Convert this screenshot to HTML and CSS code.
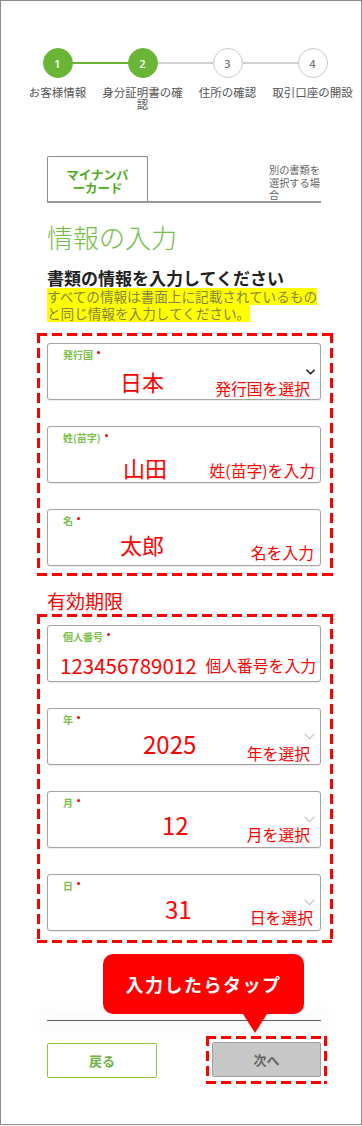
FILE: index.html
```html
<!DOCTYPE html>
<html lang="ja">
<head>
<meta charset="utf-8">
<title>情報の入力</title>
<link rel="stylesheet" href="styles.css">
</head>
<body>
<div class="frame">
  <ol class="stepper">
    <li class="step done">
      <div class="track"><span class="line none"></span><span class="dot">1</span><span class="line on"></span></div>
      <p class="step-label">お客様情報</p>
    </li>
    <li class="step done">
      <div class="track"><span class="line on"></span><span class="dot">2</span><span class="line"></span></div>
      <p class="step-label">身分証明書の確認</p>
    </li>
    <li class="step">
      <div class="track"><span class="line"></span><span class="dot">3</span><span class="line"></span></div>
      <p class="step-label">住所の確認</p>
    </li>
    <li class="step">
      <div class="track"><span class="line"></span><span class="dot">4</span><span class="line none"></span></div>
      <p class="step-label">取引口座の開設</p>
    </li>
  </ol>

  <main class="content">
    <div class="tabs">
      <div class="tab active">マイナンバ<br>ーカード</div>
      <div class="tab other">別の書類を<br>選択する場<br>合</div>
    </div>

    <h1 class="title">情報の入力</h1>
    <p class="lead">書類の情報を入力してください</p>
    <div class="note">
      <span class="hl">すべての情報は書面上に記載されているもの</span>
      <span class="hl">と同じ情報を入力してください。</span>
    </div>

    <div class="box box-first">
      <div class="field f-country">
        <div class="field-label">発行国<span class="req"></span></div>
        <div class="field-body"><span class="val">日本</span><span class="hint">発行国を選択</span></div>
        <svg class="chev dark" viewBox="0 0 10 6"><path d="M1 1 L5 5 L9 1" fill="none" stroke="#222" stroke-width="1.8" stroke-linecap="round" stroke-linejoin="round"/></svg>
      </div>
      <div class="field f-last">
        <div class="field-label">姓(苗字)<span class="req"></span></div>
        <div class="field-body"><span class="val">山田</span><span class="hint">姓(苗字)を入力</span></div>
      </div>
      <div class="field f-first">
        <div class="field-label">名<span class="req"></span></div>
        <div class="field-body"><span class="val">太郎</span><span class="hint">名を入力</span></div>
      </div>
    </div>

    <p class="sub">有効期限</p>

    <div class="box box-second">
      <div class="field f-num">
        <div class="field-label">個人番号<span class="req"></span></div>
        <div class="field-body"><span class="val">123456789012</span><span class="hint">個人番号を入力</span></div>
      </div>
      <div class="field f-year">
        <div class="field-label">年<span class="req"></span></div>
        <div class="field-body"><span class="val">2025</span><span class="hint">年を選択</span></div>
        <svg class="chev light" viewBox="0 0 10 6"><path d="M1 1 L5 5 L9 1" fill="none" stroke="#cfcfcf" stroke-width="1.4" stroke-linecap="round" stroke-linejoin="round"/></svg>
      </div>
      <div class="field f-month">
        <div class="field-label">月<span class="req"></span></div>
        <div class="field-body"><span class="val">12</span><span class="hint">月を選択</span></div>
        <svg class="chev light" viewBox="0 0 10 6"><path d="M1 1 L5 5 L9 1" fill="none" stroke="#cfcfcf" stroke-width="1.4" stroke-linecap="round" stroke-linejoin="round"/></svg>
      </div>
      <div class="field f-day">
        <div class="field-label">日<span class="req"></span></div>
        <div class="field-body"><span class="val">31</span><span class="hint">日を選択</span></div>
        <svg class="chev light" viewBox="0 0 10 6"><path d="M1 1 L5 5 L9 1" fill="none" stroke="#cfcfcf" stroke-width="1.4" stroke-linecap="round" stroke-linejoin="round"/></svg>
      </div>
    </div>

    <div class="callout-row">
      <div class="callout">入力したらタップ</div>
    </div>
    <div class="divider"></div>

    <div class="actions">
      <button class="btn-back" type="button">戻る</button>
      <div class="next-wrap">
        <button class="btn-next" type="button">次へ</button>
      </div>
    </div>
  </main>
</div>
</body>
</html>
```

FILE: styles.css
```css
html, body {
  margin: 0;
  padding: 0;
  background: #fff;
}

body {
  font-family: "Noto Sans CJK JP", "Noto Sans", sans-serif;
}

.frame {
  width: 362px;
  height: 1125px;
  box-sizing: border-box;
  border: 1px solid #8c8c8c;
  overflow: hidden;
  background: #fff;
}

/* ---------- stepper ---------- */
.stepper {
  list-style: none;
  margin: 47px 0 0 14px;
  padding: 0;
  display: grid;
  grid-template-columns: repeat(4, 85px);
}

.track {
  display: flex;
  align-items: center;
  height: 30px;
}

.line {
  flex: 1;
  height: 2px;
  background: #d2d2d2;
}

.line.on {
  background: #6bb536;
}

.line.none {
  visibility: hidden;
}

.dot {
  width: 30px;
  height: 30px;
  flex: none;
  box-sizing: border-box;
  border-radius: 50%;
  border: 1px solid #cacaca;
  background: #fff;
  display: flex;
  align-items: center;
  justify-content: center;
  font-family: "Open Sans", sans-serif;
  font-size: 11px;
  font-weight: 600;
  color: #777;
}

.done .dot {
  background: #6bb536;
  border-color: #6bb536;
  color: #fff;
}

.step-label {
  margin: 8px 2px 0;
  font-size: 11.5px;
  line-height: 12px;
  color: #555;
  text-align: center;
}

/* ---------- content ---------- */
.content {
  padding: 0 40px 0 46px;
}

.tabs {
  margin-top: 46px;
  height: 45px;
  display: flex;
  border-bottom: 2px solid #999;
}

.tab.active {
  width: 101px;
  box-sizing: border-box;
  border: 1px solid #8c8c8c;
  border-bottom: none;
  border-radius: 2px 2px 0 0;
  display: flex;
  align-items: center;
  justify-content: center;
  padding-top: 3px;
  text-align: center;
  color: #4fae1e;
  font-weight: 700;
  font-size: 12.5px;
  line-height: 13px;
}

.tab.other {
  margin-left: auto;
  width: 52px;
  box-sizing: border-box;
  padding-top: 8px;
  font-size: 10.2px;
  line-height: 12.5px;
  color: #666;
  overflow: hidden;
}

.title {
  margin: 19px 0 0;
  font-size: 26px;
  font-weight: 300;
  line-height: 30px;
  color: #74c046;
}

.lead {
  margin: 16px 0 0;
  font-size: 17px;
  font-weight: 700;
  line-height: 20px;
  color: #222;
}

.note {
  margin: 0;
  font-size: 13.6px;
  color: #858545;
}

.hl {
  display: block;
  width: fit-content;
  background: #ffff00;
  line-height: 17px;
  white-space: nowrap;
}

/* ---------- dashed boxes ---------- */
.box,
.next-wrap {
  background:
    repeating-linear-gradient(90deg, #f00 0 10px, transparent 10px 15px) left top / 100% 3px no-repeat,
    repeating-linear-gradient(90deg, #f00 0 10px, transparent 10px 15px) left bottom / 100% 3px no-repeat,
    repeating-linear-gradient(180deg, #f00 0 10px, transparent 10px 15px) left top / 3px 100% no-repeat,
    repeating-linear-gradient(180deg, #f00 0 10px, transparent 10px 15px) right top / 3px 100% no-repeat;
}

.box {
  margin: 11px -12px 0 -10px;
  padding: 10px 12px 10px 10px;
  display: flex;
  flex-direction: column;
  gap: 26px;
}

.box-second {
  margin-top: 1px;
  padding-top: 11px;
  padding-bottom: 12px;
}

/* ---------- fields ---------- */
.field {
  position: relative;
  height: 57px;
  box-sizing: border-box;
  border: 1px solid #a3a3a3;
  border-radius: 3px;
  background: #fff;
  box-shadow: 0 1px 1px rgba(0, 0, 0, 0.08);
  display: flex;
  flex-direction: column;
}

.field-label {
  margin: 5px 0 0 15px;
  font-size: 10px;
  font-weight: 700;
  line-height: 12px;
  color: #7cc049;
  display: flex;
  align-items: flex-start;
}

.req {
  width: 3px;
  height: 3px;
  border-radius: 50%;
  background: #f00;
  margin: 2px 0 0 4px;
}

.field-body {
  flex: 1;
  display: flex;
  align-items: flex-end;
}

.val {
  color: #f00;
  font-size: 22px;
  line-height: 24px;
  margin-bottom: 6px;
  white-space: nowrap;
}

.hint {
  margin-left: auto;
  margin-right: 10px;
  margin-bottom: 2px;
  color: #f00;
  font-size: 15.8px;
  line-height: 18px;
  white-space: nowrap;
}

.f-country .val { margin-left: 72px; }
.f-country .hint { margin-right: 10px; margin-bottom: 1px; }

.f-last .val { margin-left: 75px; margin-bottom: 3px; }
.f-last .hint { margin-right: 5px; margin-bottom: 2px; }

.f-first .val { margin-left: 72px; margin-bottom: 9px; }
.f-first .hint { margin-right: 6px; margin-bottom: 3px; }

.f-num .val { margin-left: 12px; font-size: 20.5px; margin-bottom: 4px; }
.f-num .hint { margin-right: 4px; margin-bottom: 6px; }

.f-year .val,
.f-month .val,
.f-day .val {
  font-size: 24px;
  line-height: 26px;
}

.f-year .val { margin-left: 95px; margin-bottom: 7px; }
.f-year .hint { margin-right: 10px; margin-bottom: 1px; }

.f-month .val { margin-left: 114px; margin-bottom: 9px; }
.f-month .hint { margin-right: 10px; margin-bottom: 3px; }

.f-day .val { margin-left: 117px; margin-bottom: 8px; }
.f-day .hint { margin-right: 7px; margin-bottom: 3px; }

.chev {
  position: absolute;
  right: 5px;
  top: 25px;
  width: 9px;
  height: 6px;
}

.chev.light {
  top: 24px;
  width: 11px;
  height: 7px;
}

/* ---------- callout & actions ---------- */
.sub {
  margin: 13px 0 0;
  font-size: 19px;
  line-height: 24px;
  color: #f00;
}

.callout-row {
  margin-top: 11px;
  display: flex;
  padding-left: 56px;
}

.callout {
  position: relative;
  width: 201px;
  height: 60px;
  border-radius: 10px;
  background: #f00;
  color: #fff;
  font-size: 18px;
  font-weight: 700;
  letter-spacing: 1.5px;
  display: flex;
  align-items: center;
  justify-content: center;
}

.callout::after {
  content: "";
  position: absolute;
  left: 140px;
  top: 100%;
  border-left: 12px solid transparent;
  border-right: 12px solid transparent;
  border-top: 19px solid #f00;
}

.divider {
  margin-top: 6px;
  height: 1px;
  background: #5f5f5f;
  box-shadow: 0 0 16px 10px rgba(0, 0, 0, 0.025);
}

.actions {
  margin: 15px -6px 0 0;
  display: flex;
  justify-content: space-between;
  align-items: center;
}

.btn-back {
  width: 110px;
  height: 35px;
  box-sizing: border-box;
  border: 1.5px solid #8cc63f;
  border-radius: 2px;
  background: #fff;
  color: #6cb33f;
  font-family: inherit;
  font-size: 13px;
  font-weight: 700;
  padding: 0;
}

.next-wrap {
  padding: 6px 6px 7px 6px;
  display: flex;
}

.btn-next {
  width: 109px;
  height: 35px;
  box-sizing: border-box;
  border: 1px solid #a0a0a0;
  border-radius: 2px;
  background: #c8c8c8;
  color: #666;
  font-family: inherit;
  font-size: 13px;
  font-weight: 700;
  padding: 0;
}
```
